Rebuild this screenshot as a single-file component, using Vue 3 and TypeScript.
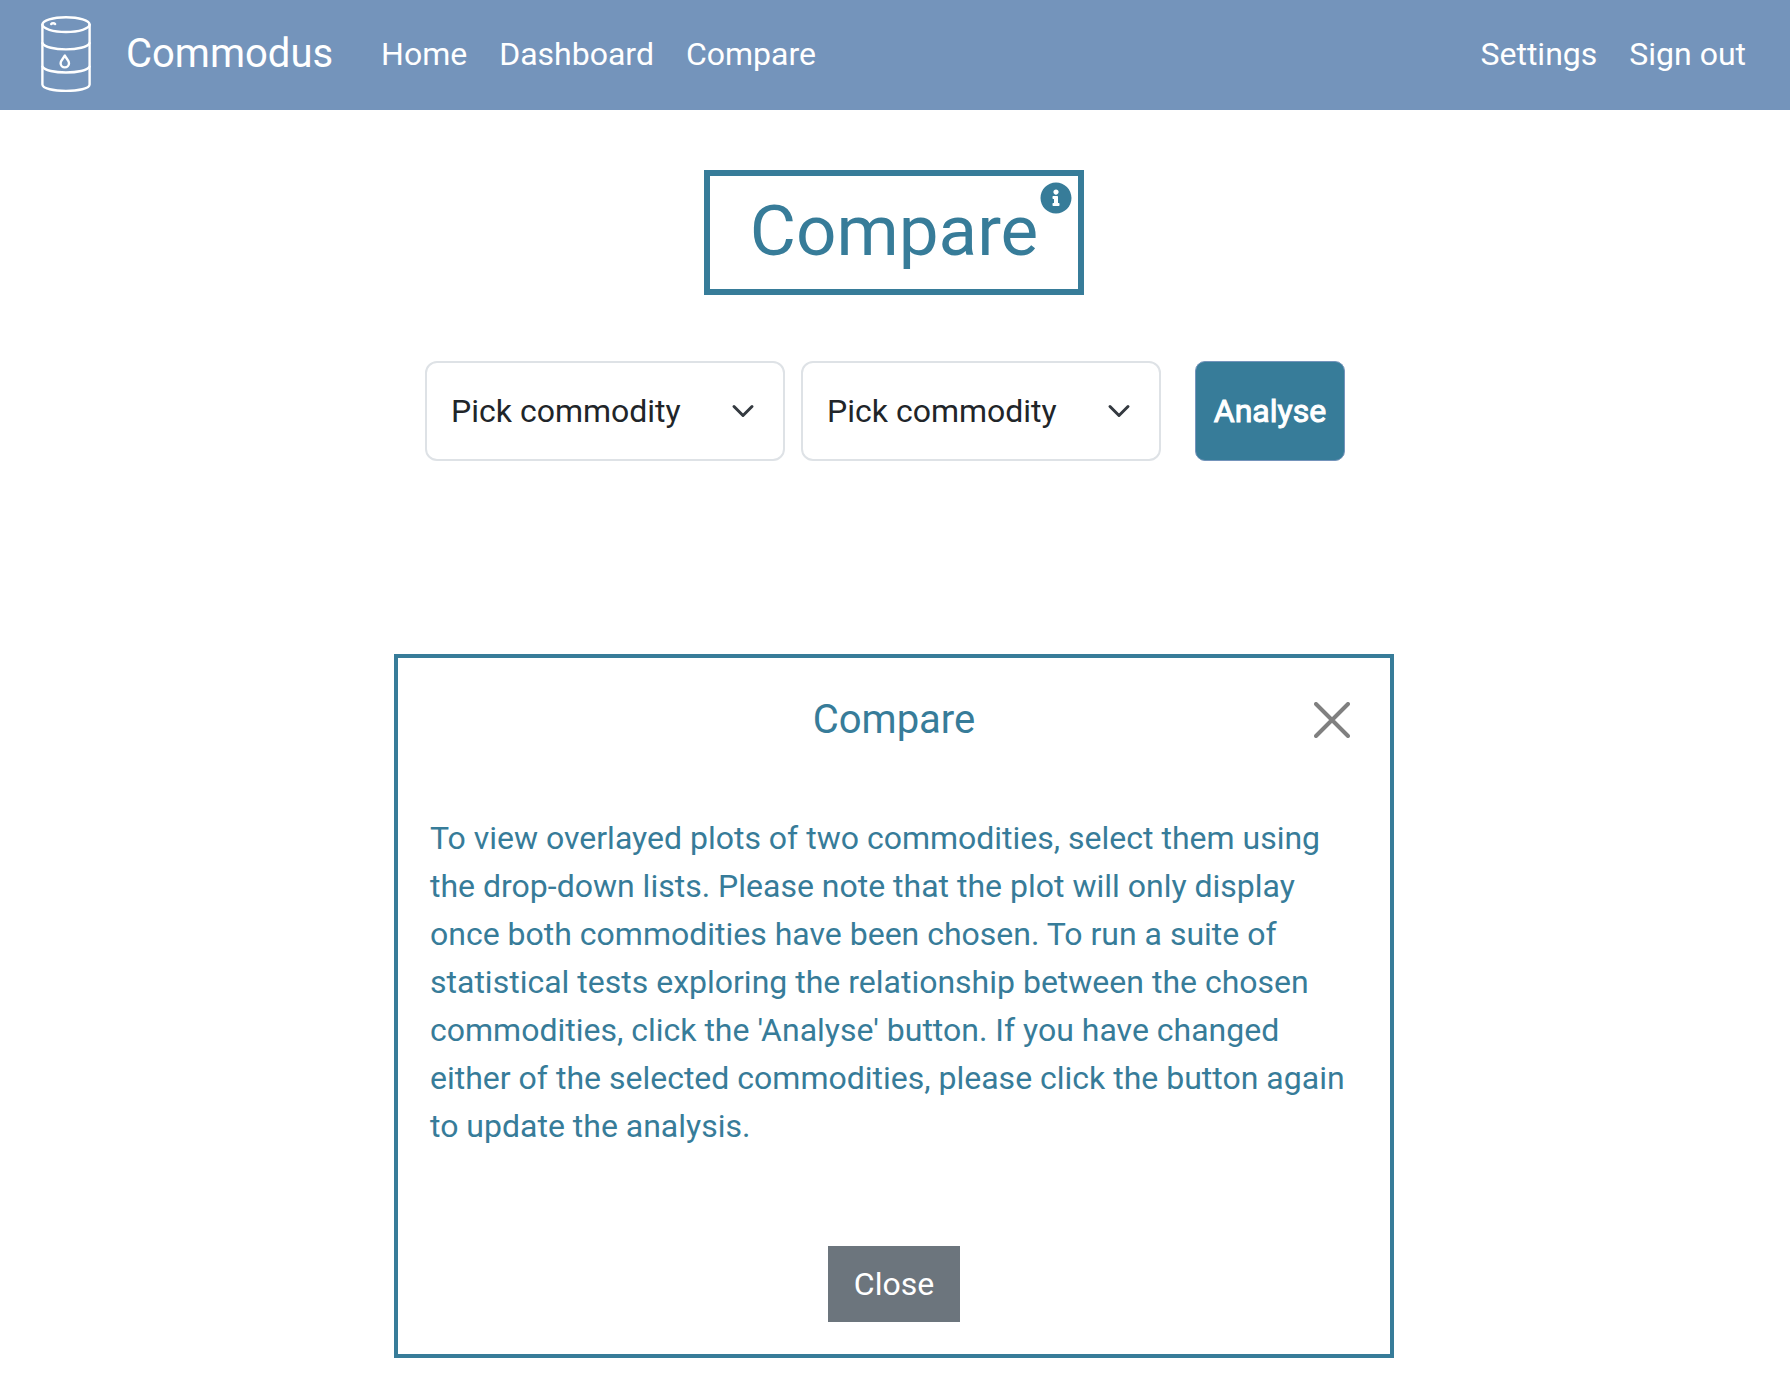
<script setup lang="ts">
import { ref } from 'vue'

interface NavLink {
  label: string
  href: string
}

const mainLinks: NavLink[] = [
  { label: 'Home', href: '#home' },
  { label: 'Dashboard', href: '#dashboard' },
  { label: 'Compare', href: '#compare' },
]

const accountLinks: NavLink[] = [
  { label: 'Settings', href: '#settings' },
  { label: 'Sign out', href: '#sign-out' },
]

const first = ref('')
const second = ref('')
const showInfo = ref(true)
</script>

<template>
  <header class="navbar">
    <a class="brand" href="#home">
      <svg class="barrel" viewBox="40 14 52 80" fill="none" stroke="#fff" stroke-width="2.4" stroke-linecap="round" aria-hidden="true">
        <ellipse cx="66" cy="24.6" rx="23.6" ry="7.4" />
        <path d="M42.4 24.6V84.5C42.4 93 89.6 93 89.6 84.5V24.6" />
        <path d="M42.4 43C46 51.5 86 51.5 89.6 43" />
        <path d="M42.4 66.5C46 74.5 86 74.5 89.6 66.5" />
        <path d="M64.8 55.5C63.5 58.5 60.6 60.5 60.6 63.2A4.2 4.2 0 0 0 69 63.2C69 60.5 66.1 58.5 64.8 55.5Z" stroke-linejoin="round" />
        <path d="M51.2 24C52 23 54.3 23 55.1 24" />
      </svg>
      <span>Commodus</span>
    </a>
    <nav class="links" aria-label="Main">
      <a v-for="link in mainLinks" :key="link.label" :href="link.href">{{ link.label }}</a>
    </nav>
    <nav class="links account" aria-label="Account">
      <a v-for="link in accountLinks" :key="link.label" :href="link.href">{{ link.label }}</a>
    </nav>
  </header>

  <main class="page">
    <div class="heading">
      <h1>Compare</h1>
      <button class="info" type="button" aria-label="About this page" @click="showInfo = true">
        <svg viewBox="0 0 512 512" aria-hidden="true">
          <path fill="currentColor" d="M256 8C119.043 8 8 119.083 8 256c0 136.997 111.043 248 248 248s248-111.003 248-248C504 119.083 392.957 8 256 8zm0 110c23.196 0 42 18.804 42 42s-18.804 42-42 42-42-18.804-42-42 18.804-42 42-42zm56 254c0 6.627-5.373 12-12 12h-88c-6.627 0-12-5.373-12-12v-24c0-6.627 5.373-12 12-12h12v-64h-12c-6.627 0-12-5.373-12-12v-24c0-6.627 5.373-12 12-12h64c6.627 0 12 5.373 12 12v100h12c6.627 0 12 5.373 12 12v24z" />
        </svg>
      </button>
    </div>

    <form class="picker" @submit.prevent>
      <select v-model="first" aria-label="First commodity">
        <option value="">Pick commodity</option>
      </select>
      <select v-model="second" aria-label="Second commodity">
        <option value="">Pick commodity</option>
      </select>
      <button class="analyse" type="submit">Analyse</button>
    </form>

    <section v-if="showInfo" class="modal" role="dialog" aria-labelledby="modal-title">
      <div class="modal-header">
        <h2 id="modal-title">Compare</h2>
        <button class="dismiss" type="button" aria-label="Close" @click="showInfo = false">
          <svg viewBox="0 0 36 36" fill="none" stroke="#808080" stroke-width="4" stroke-linecap="round" aria-hidden="true">
            <path d="M2 2L34 34M34 2L2 34" />
          </svg>
        </button>
      </div>
      <p class="modal-body">
        To view overlayed plots of two commodities, select them using the drop-down lists. Please note that the plot
        will only display once both commodities have been chosen. To run a suite of statistical tests exploring the
        relationship between the chosen commodities, click the 'Analyse' button. If you have changed either of the
        selected commodities, please click the button again to update the analysis.
      </p>
      <div class="modal-footer">
        <button class="close" type="button" @click="showInfo = false">Close</button>
      </div>
    </section>
  </main>
</template>

<style>
body {
  margin: 0;
  background: #fff;
  font-family: Roboto, 'Liberation Sans', sans-serif;
  font-size: 32px;
  line-height: 48px;
}
</style>

<style scoped>
* {
  box-sizing: border-box;
}

button,
select {
  font: inherit;
  cursor: pointer;
}

h1,
h2,
p {
  margin: 0;
  font-weight: 400;
}

.navbar {
  display: flex;
  align-items: center;
  height: 110px;
  padding: 0 28px 2px 40px;
  background: #7494bb;
}

.navbar a {
  color: #fff;
  text-decoration: none;
}

.brand {
  display: flex;
  align-items: center;
  gap: 34px;
  margin-right: 32px;
  font-size: 40px;
  line-height: 60px;
}

.barrel {
  width: 52px;
  height: 80px;
}

.links {
  display: flex;
}

.links a {
  padding: 16px;
}

.account {
  margin-left: auto;
}

.page {
  display: flex;
  flex-direction: column;
  align-items: center;
  padding: 60px 26px 32px 24px;
  color: #377c99;
}

.heading {
  display: flex;
  align-items: flex-start;
  gap: 2px;
  padding: 6px 6px 16px 40px;
  border: 6px solid #377c99;
}

h1 {
  padding-top: 7px;
  font-size: 71px;
  line-height: 84px;
}

.info {
  display: flex;
  padding: 0;
  border: 0;
  background: none;
  color: inherit;
}

.info svg {
  width: 32px;
  height: 32px;
}

.picker {
  display: flex;
  gap: 16px;
  margin-top: 66px;
  padding-right: 18px;
}

select {
  width: 360px;
  height: 100px;
  padding: 0 72px 0 24px;
  border: 2px solid #dee2e6;
  border-radius: 12px;
  appearance: none;
  background: #fff url("data:image/svg+xml,%3csvg xmlns='http://www.w3.org/2000/svg' viewBox='0 0 16 16'%3e%3cpath fill='none' stroke='%23343a40' stroke-linecap='round' stroke-linejoin='round' stroke-width='2' d='m2 5 6 6 6-6'/%3e%3c/svg%3e") no-repeat right 24px center / 32px 24px;
  color: #212529;
}

.analyse {
  min-width: 150px;
  height: 100px;
  margin-left: 18px;
  padding: 0 16px;
  border: 1px solid #7494bb;
  border-radius: 10px;
  background: #377c99;
  color: #fff;
  -webkit-text-stroke: 1px #fff;
}

.modal {
  width: 100%;
  max-width: 1000px;
  margin-top: 193px;
  border: 4px solid #377c99;
  background: #fff;
}

.modal-header {
  display: grid;
  grid-template-columns: 36px 1fr 36px;
  align-items: center;
  padding: 32px 40px;
}

h2 {
  grid-column: 2;
  font-size: 40px;
  line-height: 60px;
  text-align: center;
}

.dismiss {
  display: flex;
  padding: 0;
  border: 0;
  background: none;
}

.dismiss svg {
  width: 36px;
  height: 36px;
}

.modal-body {
  padding: 32px 32px 64px;
}

.modal-footer {
  display: flex;
  justify-content: center;
  padding: 32px;
}

.close {
  padding: 12px 24px;
  border: 2px solid #6c757d;
  background: #6c757d;
  color: #fff;
}
</style>
